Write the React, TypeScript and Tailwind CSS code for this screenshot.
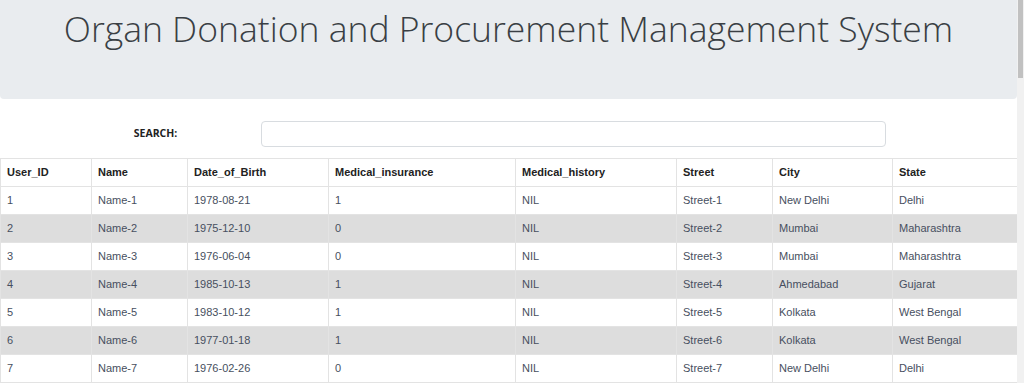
const columns = [
  { key: "id", label: "User_ID", width: 91 },
  { key: "name", label: "Name", width: 96 },
  { key: "dob", label: "Date_of_Birth", width: 141 },
  { key: "ins", label: "Medical_insurance", width: 187 },
  { key: "hist", label: "Medical_history", width: 161 },
  { key: "street", label: "Street", width: 96 },
  { key: "city", label: "City", width: 120 },
  { key: "state", label: "State", width: 125 },
];

const rows = [
  ["1", "Name-1", "1978-08-21", "1", "NIL", "Street-1", "New Delhi", "Delhi"],
  ["2", "Name-2", "1975-12-10", "0", "NIL", "Street-2", "Mumbai", "Maharashtra"],
  ["3", "Name-3", "1976-06-04", "0", "NIL", "Street-3", "Mumbai", "Maharashtra"],
  ["4", "Name-4", "1985-10-13", "1", "NIL", "Street-4", "Ahmedabad", "Gujarat"],
  ["5", "Name-5", "1983-10-12", "1", "NIL", "Street-5", "Kolkata", "West Bengal"],
  ["6", "Name-6", "1977-01-18", "1", "NIL", "Street-6", "Kolkata", "West Bengal"],
  ["7", "Name-7", "1976-02-26", "0", "NIL", "Street-7", "New Delhi", "Delhi"],
];

export default function App() {
  return (
    <div className="relative h-[383px] w-[1024px] overflow-hidden bg-white">
      <div className="w-[1017px]">
        <header className="flex h-[99px] items-start justify-center rounded-b-[4px] bg-[#e9ecef] pt-[4px]">
          <h1 className="font-['Open_Sans',sans-serif] text-[35.5px] font-light leading-[48px] text-[#3a3f44]">
            Organ Donation and Procurement Management System
          </h1>
        </header>

        <div className="flex h-[59px] items-center pt-[11px]">
          <div className="w-[261px] pl-[50px] text-center font-['Open_Sans',sans-serif] text-[10.5px] font-bold text-[#222]">
            SEARCH:
          </div>
          <input
            type="text"
            className="h-[26px] w-[625px] rounded-[4px] border border-[#d8dce0] bg-white px-2 text-sm outline-none"
          />
        </div>

        <table className="w-[1017px] table-fixed border-collapse font-['Liberation_Sans',Arial,sans-serif] text-[11px]">
          <colgroup>
            {columns.map((c) => (
              <col key={c.key} style={{ width: c.width }} />
            ))}
          </colgroup>
          <thead>
            <tr className="h-[28px]">
              {columns.map((c) => (
                <th
                  key={c.key}
                  className="border border-[#e3e3e3] px-[6px] text-left font-bold text-[#222]"
                >
                  {c.label}
                </th>
              ))}
            </tr>
          </thead>
          <tbody>
            {rows.map((r, i) => (
              <tr key={i} className={i % 2 === 1 ? "h-[28px] bg-[#dddddd]" : "h-[28px] bg-white"}>
                {r.map((v, j) => (
                  <td key={j} className="border border-[#e3e3e3] px-[6px] text-[#474f60]">
                    {v}
                  </td>
                ))}
              </tr>
            ))}
          </tbody>
        </table>
      </div>

      <div className="absolute right-0 top-0 h-full w-[7px] bg-[#f1f1f1]">
        <div className="mx-auto h-[78px] w-[5px] bg-[#c1c1c1]" />
      </div>
    </div>
  );
}
